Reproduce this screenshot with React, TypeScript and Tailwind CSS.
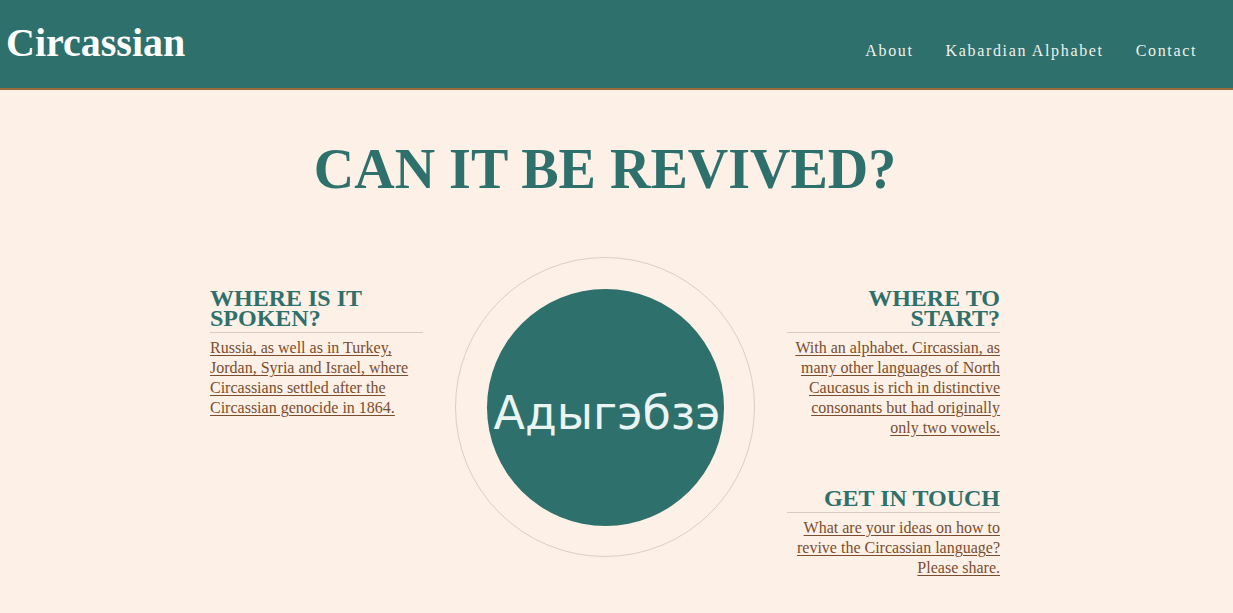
import React from 'react';

const serif = "font-['Liberation_Serif',serif]";

const Section: React.FC<{ title: string; text: string; right?: boolean; className?: string }> = ({
  title,
  text,
  right,
  className,
}) => (
  <div className={`${right ? 'text-right' : 'text-left'} ${className ?? ''}`}>
    <h2 className="text-[24px] leading-[20px] font-bold text-[#2e706b] pb-[4px] border-b border-[#d8ccc2]">
      {title}
    </h2>
    <p className="mt-[5px] text-[16px] leading-[20px] text-[#7a4d2e] underline underline-offset-2">
      {text}
    </p>
  </div>
);

const App: React.FC = () => {
  return (
    <div className={`min-h-[613px] bg-[#fdf0e6] ${serif}`}>
      <header className="h-[90px] bg-[#2e706b] border-b-2 border-[#9a6a3a] flex items-start justify-between">
        <h1 className="ml-[6px] mt-[20px] text-[40px] leading-[46px] font-bold text-white">Circassian</h1>
        <nav className="mt-[39px] mr-[20px] flex text-[16px] tracking-[1.65px] text-[#eef2ec]">
          <a className="px-4">About</a>
          <a className="px-4">Kabardian Alphabet</a>
          <a className="px-4">Contact</a>
        </nav>
      </header>

      <main className="pr-[23px] flex flex-col items-center">
        <h1 className="mt-[47px] text-[56px] leading-[64px] font-bold text-[#2e706b]">CAN IT BE REVIVED?</h1>

        <div className="mt-[56px] flex items-start gap-[32px]">
          <Section
            className="w-[213px] mt-[31px]"
            title="WHERE IS IT SPOKEN?"
            text="Russia, as well as in Turkey, Jordan, Syria and Israel, where Circassians settled after the Circassian genocide in 1864."
          />

          <div className="w-[300px] h-[300px] rounded-full border border-[#d9cfc6] flex items-center justify-center">
            <div className="w-[237px] h-[237px] rounded-full bg-[#2e706b] flex items-center justify-center overflow-visible">
              <span className="font-['DejaVu_Sans',sans-serif] text-[46px] leading-none text-[#eaf4f3] whitespace-nowrap mt-[12px] ml-[4px]">
                Адыгэбзэ
              </span>
            </div>
          </div>

          <div className="w-[213px] mt-[31px] flex flex-col gap-[50px]">
            <Section
              right
              title="WHERE TO START?"
              text="With an alphabet. Circassian, as many other languages of North Caucasus is rich in distinctive consonants but had originally only two vowels."
            />
            <Section
              right
              title="GET IN TOUCH"
              text="What are your ideas on how to revive the Circassian language? Please share."
            />
          </div>
        </div>
      </main>
    </div>
  );
};

export default App;
